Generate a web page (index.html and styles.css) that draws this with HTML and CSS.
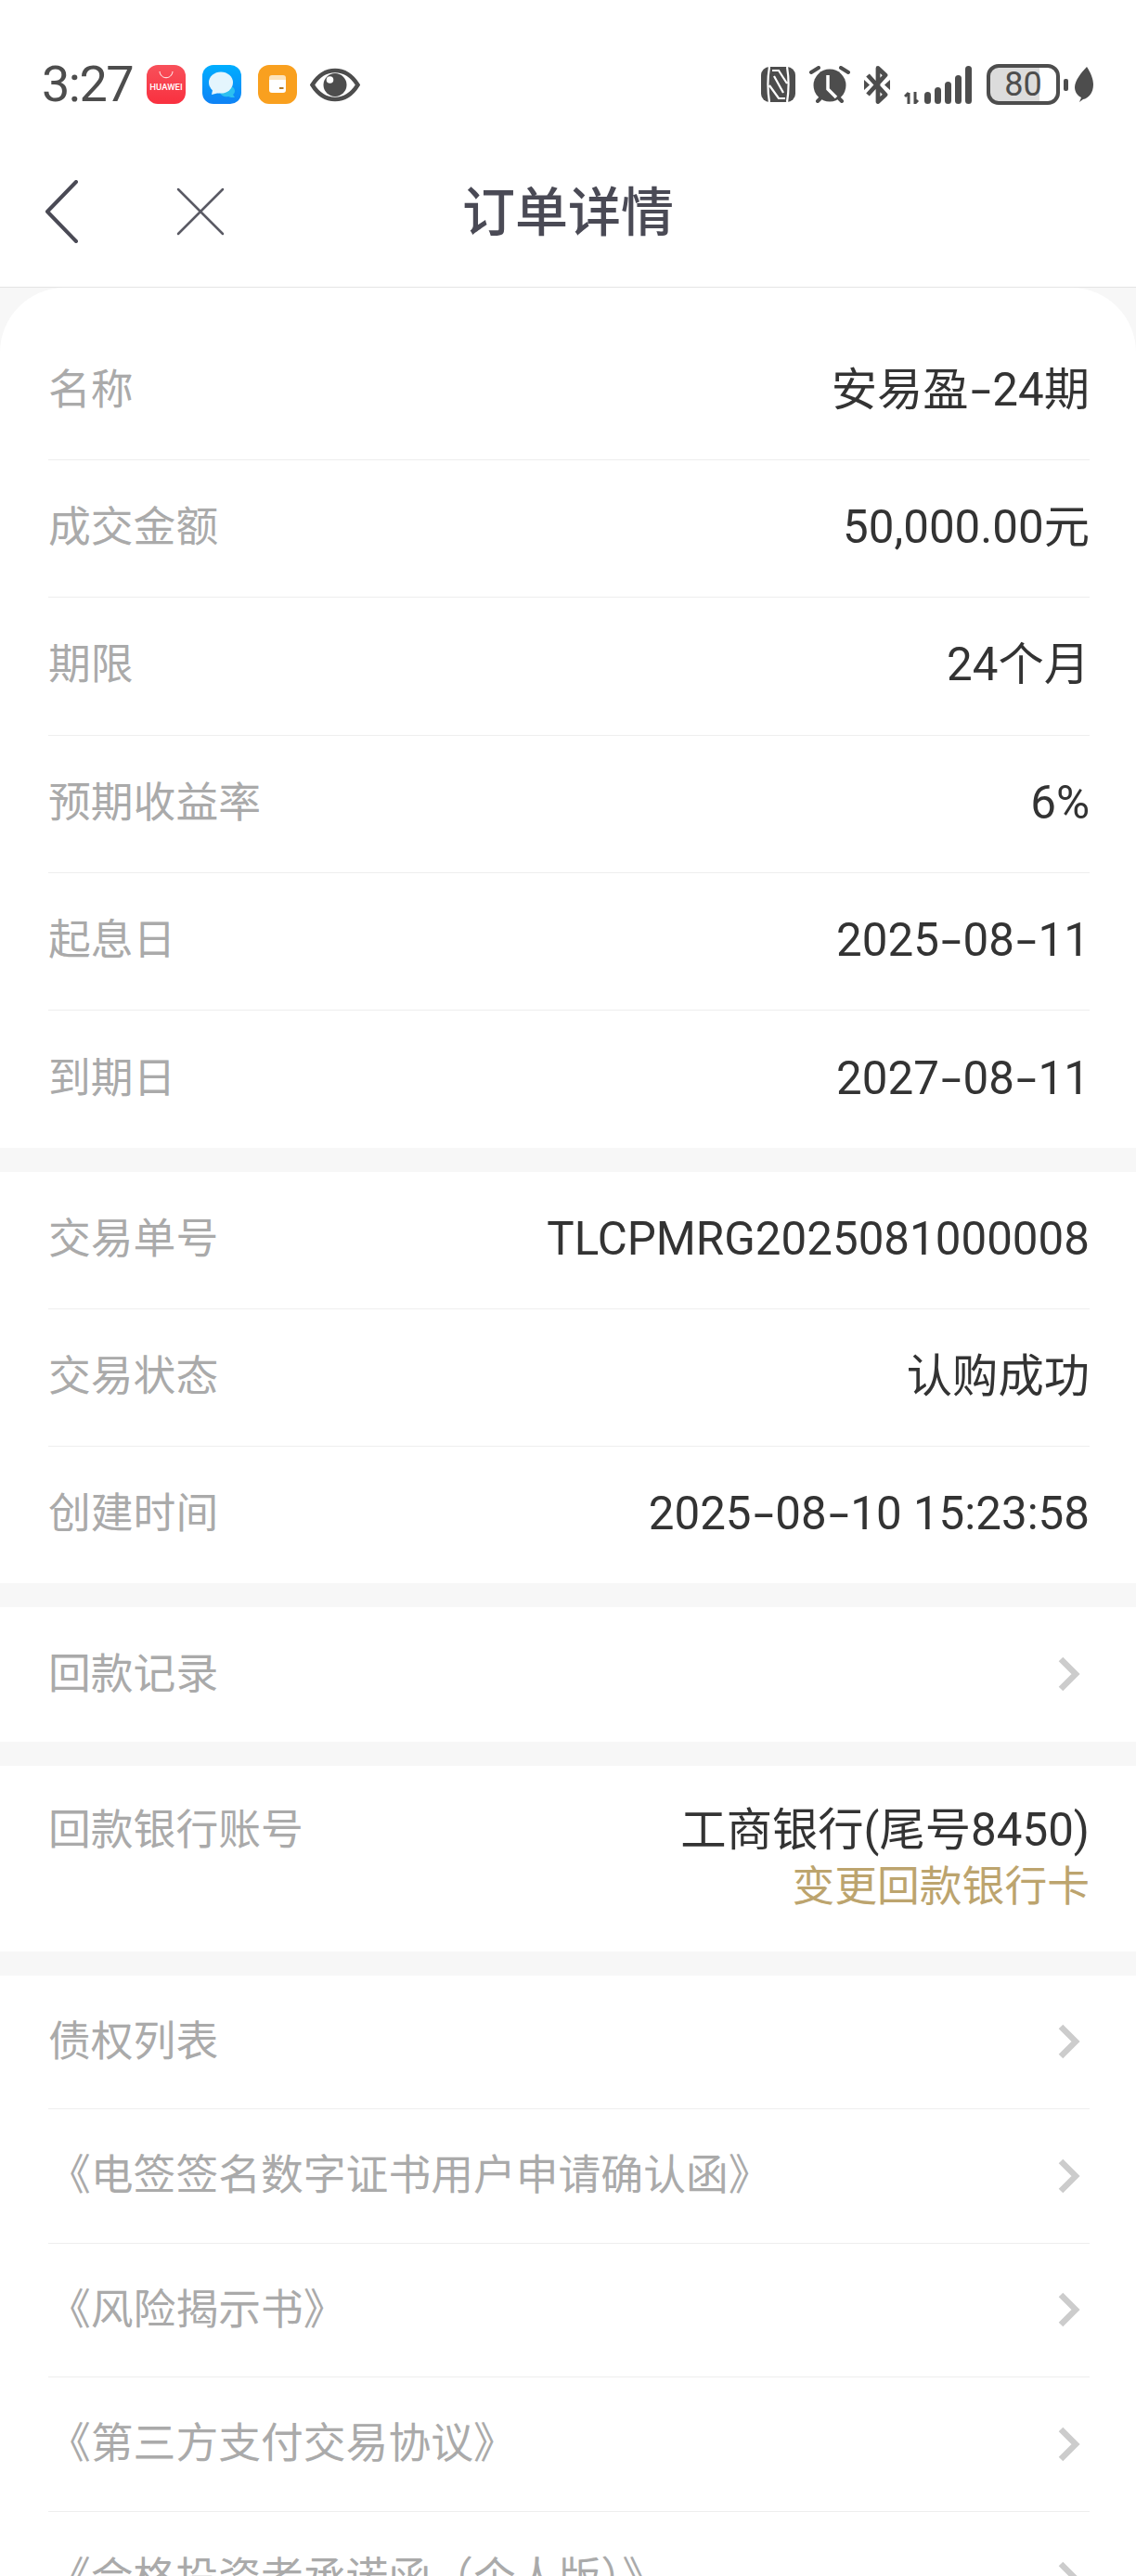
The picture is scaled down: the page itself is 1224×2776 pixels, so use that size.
FILE: index.html
```html
<!DOCTYPE html>
<html lang="zh-CN">
   <head>
      <meta charset="utf-8">
      <meta name="viewport" content="width=device-width, initial-scale=1">
      <title>订单详情</title>
      <link rel="stylesheet" href="styles.css">
   </head>
   <body>
      <header class="top">
         <div class="status">
            <div class="status-left">
               <span class="time">3:27</span>
               <svg class="app" viewBox="0 0 42 42">
                  <defs>
                     <linearGradient id="red" x1="0" y1="0" x2="0" y2="1"><stop offset="0" stop-color="#f8505a"/><stop offset="1" stop-color="#f9303f"/></linearGradient>
                     <linearGradient id="blue" x1="0" y1="0" x2="0" y2="1"><stop offset="0" stop-color="#00aeff"/><stop offset="1" stop-color="#0f82f5"/></linearGradient>
                  </defs>
                  <rect width="42" height="42" rx="12" fill="url(#red)"/>
                  <path d="M14 7c1 9 13 9 14 0" fill="none" stroke="#fff" stroke-width="1"/>
                  <text x="21" y="27" class="app-text">HUAWEI</text>
               </svg>
               <svg class="app" viewBox="0 0 42 42">
                  <rect width="42" height="42" rx="12" fill="url(#blue)"/>
                  <path d="M26 22c6 0 9 3 9 6 0 2-1 3-2 4l2 3c-3 0-5 0-7-1-4 1-8-1-9-4z" fill="#2cc0f0"/>
                  <ellipse cx="20" cy="19" rx="13" ry="11.500" fill="#e4f5fd"/>
                  <path d="M11 27l-1 5 8-2z" fill="#e4f5fd"/>
               </svg>
               <svg class="app" viewBox="0 0 42 42">
                  <rect width="42" height="42" rx="12" fill="#f9a01f"/>
                  <path d="M12 14a3 3 0 0 1 3-3h12a3 3 0 0 1 3 3v2H12z" fill="#fde3bb"/>
                  <path d="M12 16h18v11a3 3 0 0 1-3 3H15a3 3 0 0 1-3-3z" fill="#fff"/>
                  <rect x="23" y="24" width="4.500" height="2" fill="#b07a2a"/>
               </svg>
               <svg class="eye" viewBox="0 0 54 37">
                  <path d="M2.500 18.500C9 8 17 3 27 3s18 5 24.500 15.500C45 29 37 34 27 34S9 29 2.500 18.500z" fill="none" stroke="#4d4d4d" stroke-width="4.500"/>
                  <circle cx="27" cy="18.500" r="12.500" fill="#4d4d4d"/>
                  <circle cx="21.500" cy="13" r="3.800" fill="#fff"/>
               </svg>
            </div>
            <div class="status-right">
               <svg class="nfc" viewBox="0 0 37 38">
                  <rect width="37" height="38" rx="9" fill="#4d4d4d"/>
                  <path d="M9 0C7 12 7 26 9 38M28 0c2 12 2 26 0 38M12 4h7l9 14M9 20l10 14h7M14 10l10 18" fill="none" stroke="#fff" stroke-width="2.200"/>
               </svg>
               <svg class="alarm" viewBox="0 0 44 40">
                  <circle cx="22" cy="21" r="17.500" fill="#4d4d4d"/>
                  <path d="M2 7l8-5M42 7l-8-5M9 38l3-3M35 38l-3-3" stroke="#4d4d4d" stroke-width="4" stroke-linecap="round"/>
                  <path d="M20 10v15l9 9" fill="none" stroke="#fff" stroke-width="3.500"/>
               </svg>
               <svg class="bt" viewBox="0 0 28 41">
                  <path d="M4 10l19 21-8 7.500V2.500l8 7.500L4 31" fill="none" stroke="#4d4d4d" stroke-width="4.800" stroke-linejoin="round"/>
                  <path d="M0 15l6 5.500L0 26zM28 15l-6 5.500 6 5.500z" fill="#4d4d4d"/>
               </svg>
               <svg class="signal" viewBox="0 0 74 41">
                  <path d="M5 41V29M1 33l4-4M12 28v12l3-3" fill="none" stroke="#4d4d4d" stroke-width="3"/>
                  <rect x="22" y="28" width="7" height="13" rx="3.500" fill="#4d4d4d"/>
                  <rect x="33" y="23" width="7" height="18" rx="3.500" fill="#4d4d4d"/>
                  <rect x="44" y="17" width="7" height="24" rx="3.500" fill="#4d4d4d"/>
                  <rect x="55" y="10" width="7" height="31" rx="3.500" fill="#4d4d4d"/>
                  <rect x="66" y="0" width="7" height="41" rx="3.500" fill="#4d4d4d"/>
               </svg>
               <div class="battery">
                  <div class="battery-body"><span class="battery-num">80</span></div>
                  <div class="battery-nub"></div>
               </div>
               <svg class="leaf" viewBox="0 0 20 38">
                  <path d="M13 0c4 6 7 13 7 19 0 9-5 15-11 16l-4 3 2-5c-4-2-7-6-7-11C0 15 7 6 13 0z" fill="#4d4d4d"/>
               </svg>
            </div>
         </div>
         <nav class="nav">
            <div class="nav-icons">
               <svg class="back" viewBox="0 0 36 68">
                  <path d="M34 2L3 34l31 32" fill="none" stroke="#4a4a55" stroke-width="4" stroke-linecap="round" stroke-linejoin="round"/>
               </svg>
               <svg class="close" viewBox="0 0 52 52">
                  <path d="M2 2l48 48M50 2L2 50" fill="none" stroke="#5a5a64" stroke-width="2.500" stroke-linecap="round"/>
               </svg>
            </div>
            <h1 class="title">订单详情</h1>
         </nav>
      </header>
      <main class="page">
         <section class="panel panel-first">
            <div class="row"><span class="label">名称</span><span class="value">安易盈<span class="dash">-</span>24期</span></div>
            <div class="row"><span class="label">成交金额</span><span class="value">50,000.00元</span></div>
            <div class="row"><span class="label">期限</span><span class="value">24个月</span></div>
            <div class="row"><span class="label">预期收益率</span><span class="value">6%</span></div>
            <div class="row"><span class="label">起息日</span><span class="value">2025<span class="dash">-</span>08<span class="dash">-</span>11</span></div>
            <div class="row"><span class="label">到期日</span><span class="value">2027<span class="dash">-</span>08<span class="dash">-</span>11</span></div>
         </section>
         <section class="panel">
            <div class="row row-trade"><span class="label">交易单号</span><span class="value">TLCPMRG2025081000008</span></div>
            <div class="row row-trade"><span class="label">交易状态</span><span class="value">认购成功</span></div>
            <div class="row row-trade"><span class="label">创建时间</span><span class="value">2025<span class="dash">-</span>08<span class="dash">-</span>10 15:23:58</span></div>
         </section>
         <section class="panel">
            <div class="row row-link"><span class="label">回款记录</span><svg class="arrow" viewBox="0 0 24 38"><path d="M3 3l16 16L3 35" /></svg></div>
         </section>
         <section class="panel">
            <div class="row row-bank">
               <span class="label">回款银行账号</span>
               <div class="bank">
                  <span class="value">工商银行(尾号8450)</span>
                  <span class="bank-change">变更回款银行卡</span>
               </div>
            </div>
         </section>
         <section class="panel">
            <div class="row row-link"><span class="label">债权列表</span><svg class="arrow" viewBox="0 0 24 38"><path d="M3 3l16 16L3 35" /></svg></div>
            <div class="row row-link"><span class="label">《电签签名数字证书用户申请确认函》</span><svg class="arrow" viewBox="0 0 24 38"><path d="M3 3l16 16L3 35" /></svg></div>
            <div class="row row-link"><span class="label">《风险揭示书》</span><svg class="arrow" viewBox="0 0 24 38"><path d="M3 3l16 16L3 35" /></svg></div>
            <div class="row row-link"><span class="label">《第三方支付交易协议》</span><svg class="arrow" viewBox="0 0 24 38"><path d="M3 3l16 16L3 35" /></svg></div>
            <div class="row row-link"><span class="label">《合格投资者承诺函（个人版）》</span><svg class="arrow" viewBox="0 0 24 38"><path d="M3 3l16 16L3 35" /></svg></div>
         </section>
      </main>
   </body>
</html>
```

FILE: styles.css
```css
html, body {
   margin: 0;
   height: 2776px;
   overflow: hidden;
}
body {
   background-color: #f7f7f7;
   color: #333;
   font-family: Roboto, "Noto Sans CJK SC", sans-serif;
}
.top {
   height: 309px;
   background-color: white;
   border-bottom: 1px solid #e4e4e4;
}
.status {
   display: flex;
   justify-content: space-between;
   align-items: center;
   box-sizing: border-box;
   height: 147px;
   padding: 35px 46px 0 45px;
}
.status-left, .status-right {
   display: flex;
   align-items: center;
}
.status-left {
   gap: 18px;
}
.status-right {
   gap: 15px;
}
.time {
   width: 95px;
   font-size: 54px;
   line-height: 60px;
   letter-spacing: -1.500px;
   color: #4d4d4d;
}
.app {
   width: 42px;
   height: 42px;
}
.app-text {
   font-size: 9.500px;
   font-weight: 500;
   fill: white;
   text-anchor: middle;
}
.eye {
   width: 54px;
   height: 37px;
   margin-left: -4px;
}
.nfc {
   width: 37px;
   height: 38px;
}
.alarm {
   width: 44px;
   height: 40px;
}
.bt {
   width: 28px;
   height: 41px;
}
.signal {
   width: 74px;
   height: 41px;
}
.battery {
   display: flex;
   align-items: center;
   gap: 4px;
}
.battery-body {
   display: flex;
   align-items: center;
   justify-content: center;
   box-sizing: border-box;
   width: 79px;
   height: 44px;
   border: 4px solid #4d4d4d;
   border-radius: 13px;
   background: linear-gradient(to right, #dcdcdc 75%, white 75%);
}
.battery-num {
   font-size: 36px;
   line-height: 36px;
   color: #4d4d4d;
}
.battery-nub {
   width: 5px;
   height: 13px;
   border-radius: 2px;
   background-color: #4d4d4d;
}
.leaf {
   width: 20px;
   height: 38px;
   margin-left: -8px;
}
.nav {
   display: grid;
   grid-template-columns: 1fr auto 1fr;
   align-items: center;
   height: 162px;
}
.nav-icons {
   display: flex;
   align-items: center;
   gap: 106px;
   padding-left: 48px;
}
.back {
   width: 36px;
   height: 68px;
}
.close {
   width: 52px;
   height: 52px;
}
.title {
   margin: 4px 0 0;
   font-size: 57px;
   font-weight: 500;
   line-height: 70px;
   color: #4a4a55;
}
.panel {
   margin-top: 26px;
   background-color: white;
}
.panel-first {
   margin-top: 0;
   padding-top: 38px;
   border-radius: 70px 70px 0 0;
}
.row {
   display: flex;
   justify-content: space-between;
   align-items: center;
   box-sizing: border-box;
   height: 148.200px;
   margin: 0 50px 0 52px;
   padding-bottom: 2px;
   border-bottom: 1px solid #eee;
}
.row:last-child {
   border-bottom: 0;
}
.row-trade {
   height: 147.700px;
}
.row-link {
   height: 144.500px;
   padding-bottom: 0;
}
.row-bank {
   align-items: flex-start;
   height: 200px;
   padding: 39px 0 0;
}
.label {
   font-size: 45.800px;
   line-height: 61px;
   color: #aaa;
}
.value {
   font-size: 49.300px;
   line-height: 61px;
   color: #333;
}
/* the hyphens are longer in the app's font */
.dash {
   display: inline-block;
   margin: 0 6px;
   transform: scaleX(1.6);
}
.bank {
   display: flex;
   flex-direction: column;
   align-items: flex-end;
}
.bank-change {
   font-size: 45.800px;
   line-height: 61px;
   color: #bca46e;
}
.arrow {
   width: 24px;
   height: 38px;
   margin-right: 10px;
   fill: none;
   stroke: #ccc;
   stroke-width: 6.500px;
}
```
